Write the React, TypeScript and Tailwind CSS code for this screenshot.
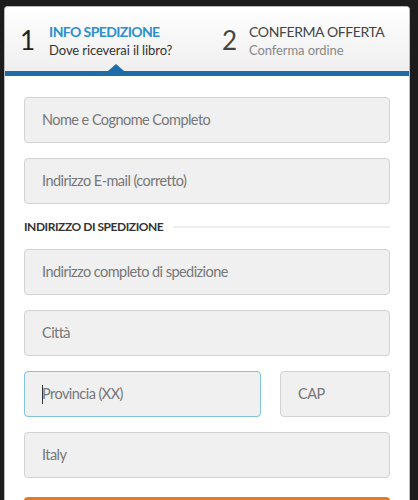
import React from "react";

const font = { fontFamily: "Lato, 'Open Sans', sans-serif" };

function Field({ label, className = "", focused = false }: { label: string; className?: string; focused?: boolean }) {
  return (
    <div
      className={
        "h-[46px] rounded-[4px] border bg-[#f0f0f0] flex items-center pl-[17px] text-[14.5px] tracking-[-0.55px] text-[#777] " +
        (focused ? "border-[#7fc3d9]" : "border-[#d2d2d2]") +
        " " +
        className
      }
    >
      {focused && <span className="w-px h-[19px] bg-[#333] mr-[-1px]" />}
      <span>{label}</span>
    </div>
  );
}

export default function App() {
  return (
    <div className="w-[418px] h-[500px] overflow-hidden bg-[#1c1c1c] pt-[6px] pl-[4px]" style={font}>
      <div className="w-[406px] h-[520px] rounded-t-[4px] bg-white border-l border-r border-t border-[#bbb] overflow-hidden">
        <div className="relative h-[64px] bg-gradient-to-b from-white to-[#efefef] flex pl-[15px]">
          <div className="w-[202px] flex items-center gap-[14px] pt-[1px]">
            <span className="text-[26px] leading-none text-[#222]">1</span>
            <div className="flex flex-col">
              <span className="text-[14px] font-bold text-[#2b8fd0] leading-[20px] tracking-[-0.6px]">INFO SPEDIZIONE</span>
              <span className="text-[13px] text-[#333] leading-[16px] tracking-[-0.1px]">Dove riceverai il libro?</span>
            </div>
          </div>
          <div className="flex items-center gap-[12px] pt-[1px]">
            <span className="text-[26px] leading-none text-[#444]">2</span>
            <div className="flex flex-col">
              <span className="text-[14px] text-[#444] leading-[20px] tracking-[-0.4px]">CONFERMA OFFERTA</span>
              <span className="text-[13px] text-[#888] leading-[16px] tracking-[-0.1px]">Conferma ordine</span>
            </div>
          </div>
          <div className="absolute left-[103px] bottom-0 w-0 h-0 border-l-[8px] border-r-[8px] border-b-[7px] border-l-transparent border-r-transparent border-b-[#1b6ca8]" />
        </div>
        <div className="h-[5px] bg-[#1b6ca8]" />
        <div className="px-[19px] pt-[21px] flex flex-col gap-[15px]">
          <Field label="Nome e Cognome Completo" />
          <Field label="Indirizzo E-mail (corretto)" />
          <div className="flex items-center gap-[10px] h-[15px]">
            <span className="text-[12px] font-bold text-[#333] tracking-[-0.45px]">INDIRIZZO DI SPEDIZIONE</span>
            <div className="flex-1 h-[2px] bg-[#eeeeee]" />
          </div>
          <Field label="Indirizzo completo di spedizione" />
          <Field label="Città" />
          <div className="flex gap-[19px]">
            <Field label="Provincia (XX)" focused className="w-[237px]" />
            <Field label="CAP" className="flex-1" />
          </div>
          <Field label="Italy" />
          <div className="h-[46px] rounded-[4px] bg-[#e07b2c] mt-[4px]" />
        </div>
      </div>
    </div>
  );
}
